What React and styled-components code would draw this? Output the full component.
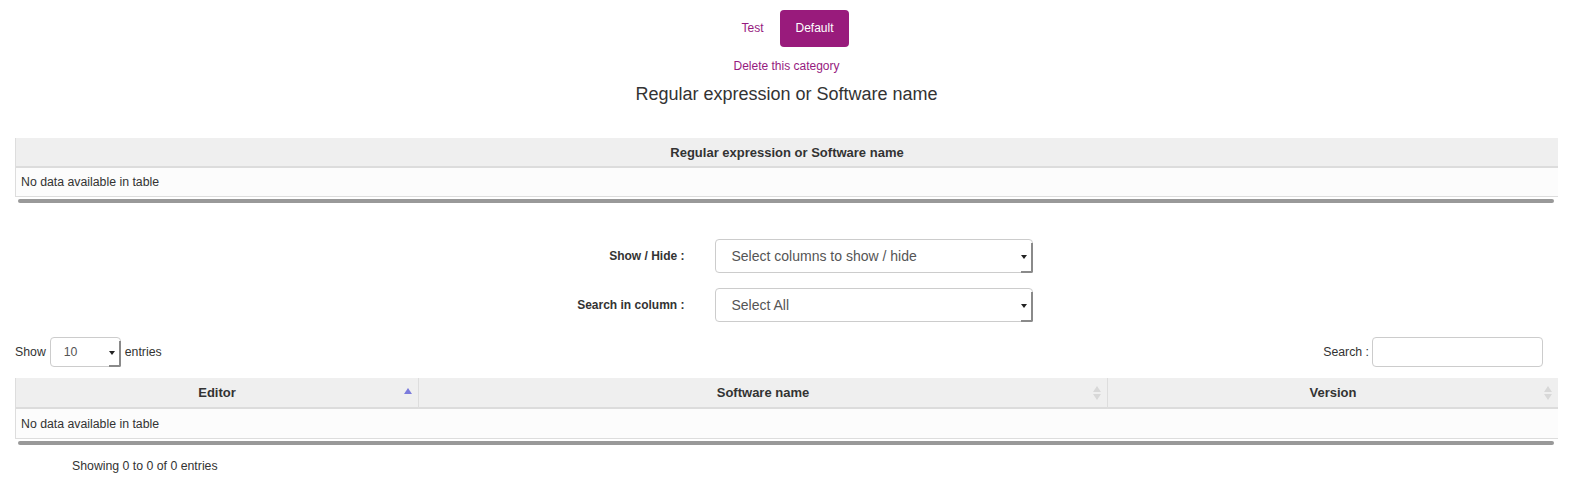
import React from "react";
import styled, { createGlobalStyle } from "styled-components";

const Global = createGlobalStyle`
  html, body { margin: 0; padding: 0; background: #fff; }
  body { font-family: "Liberation Sans", Arial, sans-serif; font-size: 12px; color: #333; }
  * { box-sizing: border-box; }
`;

const Page = styled.div`
  width: 1573px;
  padding: 10px 15px 0 15px;
  display: flex;
  flex-direction: column;
`;

const Nav = styled.div`
  display: flex;
  justify-content: center;
  gap: 2px;
  padding-left: 2px;
`;

const Pill = styled.a`
  display: block;
  padding: 10px 15px;
  line-height: 17px;
  font-size: 12px;
  border-radius: 4px;
  text-decoration: none;
  cursor: pointer;
  color: ${(p) => (p.$active ? "#fff" : "#961a80")};
  background: ${(p) => (p.$active ? "#991b7c" : "transparent")};
`;

const DeleteLink = styled.a`
  align-self: center;
  margin-top: 11px;
  line-height: 17px;
  font-size: 12px;
  color: #961a80;
  text-decoration: none;
`;

const Heading = styled.h3`
  margin: 8px 0 0 0;
  text-align: center;
  font-size: 18px;
  font-weight: normal;
  line-height: 22px;
  color: #333;
`;

const TableWrap = styled.div`
  margin-top: ${(p) => p.$mt}px;
  display: flex;
  flex-direction: column;
`;

const Table = styled.div`
  display: grid;
  grid-template-columns: ${(p) => p.$cols};
  border-left: 1px solid #ddd;
`;

const HeadCell = styled.div`
  position: relative;
  height: ${(p) => p.$h}px;
  background: #efefef;
  border-bottom: 2px solid #dcdcdc;
  border-left: ${(p) => (p.$first ? "none" : "1px solid #ddd")};
  font-weight: bold;
  font-size: 13px;
  display: flex;
  align-items: center;
  justify-content: center;
  color: #333;
`;

const BodyCell = styled.div`
  grid-column: 1 / -1;
  height: ${(p) => p.$h}px;
  background: #fcfcfc;
  border-bottom: 1px solid #ddd;
  padding: 0 5px;
  display: flex;
  align-items: center;
  font-size: 12.3px;
  color: #333;
`;

const Scrollbar = styled.div`
  margin: 2px 4px 0 3px;
  height: 4px;
  border-radius: 2px;
  background: #999;
`;

const SortIcon = styled.svg`
  position: absolute;
  right: 5px;
  top: 50%;
  transform: translateY(-50%);
`;

const FilterForm = styled.div`
  margin-top: 36px;
  display: flex;
  flex-direction: column;
  align-items: center;
  gap: 15px;
`;

const FilterRow = styled.div`
  display: flex;
  align-items: center;
  margin-left: 4px;
`;

const FilterLabel = styled.label`
  width: 170px;
  padding-right: 30px;
  text-align: right;
  font-weight: bold;
  font-size: 12px;
  color: #333;
`;

const SelectBox = styled.div`
  position: relative;
  width: ${(p) => p.$w}px;
  height: ${(p) => p.$h}px;
  border: 1px solid #ccc;
  border-radius: 4px;
  padding-left: ${(p) => p.$pl}px;
  display: flex;
  align-items: center;
  font-size: ${(p) => p.$fs}px;
  color: #555;
  background: #fff;
  &::after {
    content: "";
    position: absolute;
    right: -1px;
    bottom: -1px;
    top: 3px;
    width: 10px;
    border-right: 2px solid #8a8a8a;
    border-bottom: 2px solid #8a8a8a;
    border-bottom-right-radius: 2px;
  }
`;

const Caret = styled.span`
  position: absolute;
  right: 5px;
  top: 50%;
  margin-top: -1px;
  width: 0;
  height: 0;
  border-left: 3px solid transparent;
  border-right: 3px solid transparent;
  border-top: 4px solid #222;
`;

const ControlsRow = styled.div`
  margin-top: 15px;
  display: flex;
  justify-content: space-between;
  align-items: center;
  padding-right: 15px;
`;

const Length = styled.div`
  display: flex;
  align-items: center;
  gap: 4px;
  font-size: 12.3px;
`;

const SearchBox = styled.div`
  display: flex;
  align-items: center;
  gap: 3px;
  font-size: 12.3px;
`;

const SearchInput = styled.input`
  width: 171px;
  height: 30px;
  border: 1px solid #ccc;
  border-radius: 4px;
  outline: none;
`;

const Info = styled.div`
  margin: 14px 0 0 57px;
  font-size: 12.3px;
  line-height: 14px;
  color: #333;
`;

const Asc = () => (
  <SortIcon width="10" height="14" viewBox="0 0 10 14">
    <polygon points="1,8 9,8 5,2" fill="#7b7bdc" />
  </SortIcon>
);

const Both = () => (
  <SortIcon width="10" height="16" viewBox="0 0 10 16">
    <polygon points="1,7 9,7 5,1" fill="#d8d8d8" />
    <polygon points="1,9 9,9 5,15" fill="#d8d8d8" />
  </SortIcon>
);

export default function App() {
  return (
    <Page>
      <Global />
      <Nav>
        <Pill>Test</Pill>
        <Pill $active>Default</Pill>
      </Nav>
      <DeleteLink>Delete this category</DeleteLink>
      <Heading>Regular expression or Software name</Heading>

      <TableWrap $mt={33}>
        <Table $cols="1fr">
          <HeadCell $first $h={30}>Regular expression or Software name</HeadCell>
          <BodyCell $h={29}>No data available in table</BodyCell>
        </Table>
        <Scrollbar />
      </TableWrap>

      <FilterForm>
        <FilterRow>
          <FilterLabel>Show / Hide :</FilterLabel>
          <SelectBox $w={318} $h={34} $pl={16} $fs={14}>
            Select columns to show / hide
            <Caret />
          </SelectBox>
        </FilterRow>
        <FilterRow>
          <FilterLabel>Search in column :</FilterLabel>
          <SelectBox $w={318} $h={34} $pl={16} $fs={14}>
            Select All
            <Caret />
          </SelectBox>
        </FilterRow>
      </FilterForm>

      <ControlsRow>
        <Length>
          Show
          <SelectBox $w={71} $h={30} $pl={13} $fs={12.3}>
            10
            <Caret />
          </SelectBox>
          entries
        </Length>
        <SearchBox>
          Search :
          <SearchInput type="text" />
        </SearchBox>
      </ControlsRow>

      <TableWrap $mt={11}>
        <Table $cols="402px 689px 1fr">
          <HeadCell $first $h={31}>
            Editor
            <Asc />
          </HeadCell>
          <HeadCell $h={31}>
            Software name
            <Both />
          </HeadCell>
          <HeadCell $h={31}>
            Version
            <Both />
          </HeadCell>
          <BodyCell $h={30}>No data available in table</BodyCell>
        </Table>
        <Scrollbar />
      </TableWrap>

      <Info>Showing 0 to 0 of 0 entries</Info>
    </Page>
  );
}
